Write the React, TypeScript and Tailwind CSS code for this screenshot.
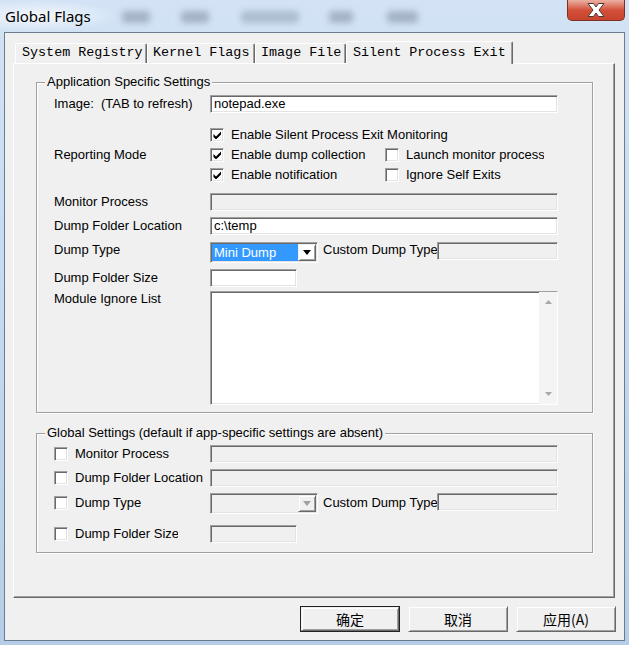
import React from "react";

// classic 3D edges
const sunken =
  "border border-t-[#a0a0a0] border-l-[#a0a0a0] border-b-white border-r-white shadow-[inset_1px_1px_0_#696969,inset_-1px_-1px_0_#e3e3e3]";
const raised =
  "border border-t-[#f0f0f0] border-l-[#f0f0f0] border-b-[#696969] border-r-[#696969] shadow-[inset_1px_1px_0_#fff,inset_-1px_-1px_0_#a0a0a0]";

function Check({ checked = false }: { checked?: boolean }) {
  return (
    <div className={`w-[14px] h-[14px] shrink-0 bg-white flex items-center justify-center ${sunken}`}>
      {checked && (
        <svg width="9" height="8" viewBox="0 0 9 8">
          <path d="M0.5 3L3 5.5L8 0.5V3.5L3 8.5L0.5 6Z" fill="#000" />
        </svg>
      )}
    </div>
  );
}

function Edit({ className = "", value = "", disabled = false }: { className?: string; value?: string; disabled?: boolean }) {
  return (
    <div
      className={`h-[18px] shrink-0 flex items-center pl-[3px] whitespace-nowrap overflow-hidden ${
        disabled ? "bg-[#f0f0f0]" : "bg-white"
      } ${sunken} ${className}`}
    >
      {value}
    </div>
  );
}

function Combo({ value, disabled = false }: { value?: string; disabled?: boolean }) {
  return (
    <div className={`w-[108px] h-[21px] shrink-0 flex p-[1px] ${disabled ? "bg-[#f0f0f0]" : "bg-white"} ${sunken}`}>
      <div className={`flex-1 flex items-center pl-[2px] ${value ? "bg-[#3399ff] text-white" : ""}`}>{value}</div>
      <div className={`w-[18px] flex items-center justify-center ${raised}`}>
        <svg width="8" height="5" viewBox="0 0 8 5">
          <path d="M0 0H8L4 5Z" fill={disabled ? "#a0a0a0" : "#000"} />
        </svg>
      </div>
    </div>
  );
}

function Group({ title, className = "", children }: { title: string; className?: string; children: React.ReactNode }) {
  return (
    <div
      className={`ml-[22px] w-[557px] border border-[#a0a0a0] shadow-[inset_1px_1px_0_#fff,1px_1px_0_#fff] pl-[17px] ${className}`}
    >
      <div className="-mt-[9px] ml-[-9px] px-[2px] w-fit bg-[#f0f0f0] leading-[16px] whitespace-nowrap">{title}</div>
      {children}
    </div>
  );
}

export default function App() {
  return (
    <div className="w-[629px] h-[645px] overflow-hidden flex flex-col bg-gradient-to-b from-[#d3e3f5] via-[#c4d9f0] to-[#b5cde8] font-['Liberation_Sans',Arial,sans-serif] text-[13px] text-black">
      {/* title bar */}
      <div className="h-[32px] shrink-0 flex items-start">
        <div className="w-[120px] h-[32px] pl-[5px] flex items-center bg-[radial-gradient(ellipse_at_30%_50%,rgba(255,255,255,0.75),transparent_70%)]">
          <span className="font-['Noto_Sans',sans-serif] text-[15px] leading-[20px]">Global Flags</span>
        </div>
        <div className="mt-[11px] ml-[2px] w-[28px] h-[12px] rounded bg-[#75849a]/50 blur-[3px]" />
        <div className="mt-[11px] ml-[31px] w-[28px] h-[12px] rounded bg-[#75849a]/50 blur-[3px]" />
        <div className="mt-[11px] ml-[32px] w-[58px] h-[12px] rounded bg-[#75849a]/40 blur-[3px]" />
        <div className="mt-[11px] ml-[30px] w-[24px] h-[12px] rounded bg-[#75849a]/50 blur-[3px]" />
        <div className="mt-[11px] ml-[34px] w-[31px] h-[12px] rounded bg-[#75849a]/50 blur-[3px]" />
        <div className="flex-1" />
        <div className="w-[58px] h-[21px] mr-[4px] rounded-b-[5px] border border-t-0 border-[#7a3226] bg-gradient-to-b from-[#eab0a4] via-[#d2503a] to-[#c8432c] flex items-center justify-center">
          <svg width="18" height="14" viewBox="0 0 18 14">
            <path
              d="M1 0.5H6.5L9 4L11.5 0.5H17L12 7L17 13.5H11.5L9 10L6.5 13.5H1L6 7Z"
              fill="#fff"
              stroke="#4a3a38"
              strokeWidth="1"
              strokeLinejoin="round"
            />
          </svg>
        </div>
      </div>

      {/* client area */}
      <div className="mx-[4px] h-[609px] shrink-0 border border-[#6b7c90] bg-[#f0f0f0] pt-[8px] pl-[8px] flex flex-col">
        {/* tabs */}
        <div className="h-[22px] flex items-end pl-[2px] font-['Liberation_Mono','Courier_New',monospace] text-[13.4px]">
          <div className="w-[132px] h-[20px] pl-[6px] flex items-center border border-b-0 border-white border-r-[#696969] rounded-t-[2px] shadow-[inset_-1px_0_0_#a0a0a0]">
            System Registry
          </div>
          <div className="w-[108px] h-[20px] pl-[5px] flex items-center border border-b-0 border-white border-r-[#696969] rounded-t-[2px] shadow-[inset_-1px_0_0_#a0a0a0]">
            Kernel Flags
          </div>
          <div className="w-[91px] h-[20px] pl-[5px] flex items-center border border-b-0 border-white border-r-[#696969] rounded-t-[2px] shadow-[inset_-1px_0_0_#a0a0a0]">
            Image File
          </div>
          <div className="relative z-10 w-[167px] h-[23px] -mb-[1px] pl-[6px] flex items-center bg-[#f0f0f0] border border-b-0 border-white border-r-[#696969] rounded-t-[2px] shadow-[inset_-1px_0_0_#a0a0a0]">
            Silent Process Exit
          </div>
        </div>

        {/* tab panel */}
        <div className="h-[535px] w-[602px] shrink-0 flex flex-col border border-t-white border-l-white border-b-[#696969] border-r-[#696969] shadow-[inset_-1px_-1px_0_#a0a0a0]">
          <Group title="Application Specific Settings" className="mt-[18px] pb-[7px]">
            <div className="mt-[5px] h-[18px] flex items-center">
              <div className="w-[156px] whitespace-pre">{"Image:  (TAB to refresh)"}</div>
              <Edit className="w-[348px]" value="notepad.exe" />
            </div>

            <div className="mt-[12px] h-[20px] flex items-center">
              <div className="w-[156px]" />
              <Check checked />
              <span className="ml-[7px] whitespace-nowrap">Enable Silent Process Exit Monitoring</span>
            </div>
            <div className="h-[20px] flex items-center">
              <div className="w-[156px]">Reporting Mode</div>
              <div className="w-[175px] flex items-center">
                <Check checked />
                <span className="ml-[7px] whitespace-nowrap">Enable dump collection</span>
              </div>
              <Check />
              <span className="ml-[7px] w-[138px] overflow-hidden whitespace-nowrap">Launch monitor process</span>
            </div>
            <div className="h-[20px] flex items-center">
              <div className="w-[156px]" />
              <div className="w-[175px] flex items-center">
                <Check checked />
                <span className="ml-[7px] whitespace-nowrap">Enable notification</span>
              </div>
              <Check />
              <span className="ml-[7px] whitespace-nowrap">Ignore Self Exits</span>
            </div>

            <div className="mt-[8px] h-[18px] flex items-center">
              <div className="w-[156px]">Monitor Process</div>
              <Edit className="w-[348px]" disabled />
            </div>
            <div className="mt-[6px] h-[18px] flex items-center">
              <div className="w-[156px]">Dump Folder Location</div>
              <Edit className="w-[348px]" value={"c:\\temp"} />
            </div>
            <div className="mt-[7px] h-[21px] flex items-start">
              <div className="w-[156px] leading-[15px]">Dump Type</div>
              <Combo value="Mini Dump" />
              <div className="ml-[5px] w-[114px] leading-[15px] whitespace-nowrap">Custom Dump Type</div>
              <Edit className="w-[121px]" disabled />
            </div>
            <div className="mt-[6px] h-[18px] flex items-center">
              <div className="w-[156px]">Dump Folder Size</div>
              <Edit className="w-[87px]" />
            </div>
            <div className="mt-[4px] flex items-start">
              <div className="w-[156px] leading-[16px]">Module Ignore List</div>
              <div className={`w-[348px] h-[114px] bg-white flex justify-end ${sunken}`}>
                <div className="w-[18px] h-full bg-[#f4f4f4] flex flex-col justify-between py-[8px] items-center">
                  <svg width="7" height="4" viewBox="0 0 7 4">
                    <path d="M0 4H7L3.5 0Z" fill="#a8a8a8" />
                  </svg>
                  <svg width="7" height="4" viewBox="0 0 7 4">
                    <path d="M0 0H7L3.5 4Z" fill="#a8a8a8" />
                  </svg>
                </div>
              </div>
            </div>
          </Group>

          <Group title="Global Settings (default if app-specific settings are absent)" className="mt-[20px] pb-[9px]">
            <div className="mt-[4px] h-[18px] flex items-center">
              <div className="w-[156px] flex items-center">
                <Check />
                <span className="ml-[7px] whitespace-nowrap">Monitor Process</span>
              </div>
              <Edit className="w-[348px]" disabled />
            </div>
            <div className="mt-[6px] h-[18px] flex items-center">
              <div className="w-[156px] flex items-center">
                <Check />
                <span className="ml-[7px] whitespace-nowrap">Dump Folder Location</span>
              </div>
              <Edit className="w-[348px]" disabled />
            </div>
            <div className="mt-[6px] h-[21px] flex items-start">
              <div className="w-[156px] h-[20px] flex items-center">
                <Check />
                <span className="ml-[7px] whitespace-nowrap">Dump Type</span>
              </div>
              <Combo disabled />
              <div className="ml-[5px] w-[114px] pt-[2px] leading-[15px] whitespace-nowrap">Custom Dump Type</div>
              <Edit className="w-[121px]" disabled />
            </div>
            <div className="mt-[11px] h-[18px] flex items-center">
              <div className="w-[156px] flex items-center">
                <Check />
                <span className="ml-[7px] w-[103px] overflow-hidden whitespace-nowrap">Dump Folder Size</span>
              </div>
              <Edit className="w-[87px]" disabled />
            </div>
          </Group>
        </div>

        {/* dialog buttons */}
        <div className="mt-[8px] pr-[8px] flex justify-end gap-[8px] font-['Noto_Sans_CJK_SC',sans-serif] text-[14px]">
          <div className="w-[100px] h-[26px] border border-[#222] flex">
            <div className={`flex-1 flex items-center justify-center bg-[#f0f0f0] ${raised}`}>确定</div>
          </div>
          <div className={`w-[100px] h-[26px] flex items-center justify-center bg-[#f0f0f0] ${raised}`}>取消</div>
          <div className={`w-[100px] h-[26px] flex items-center justify-center bg-[#f0f0f0] ${raised}`}>应用(A)</div>
        </div>
      </div>
    </div>
  );
}
